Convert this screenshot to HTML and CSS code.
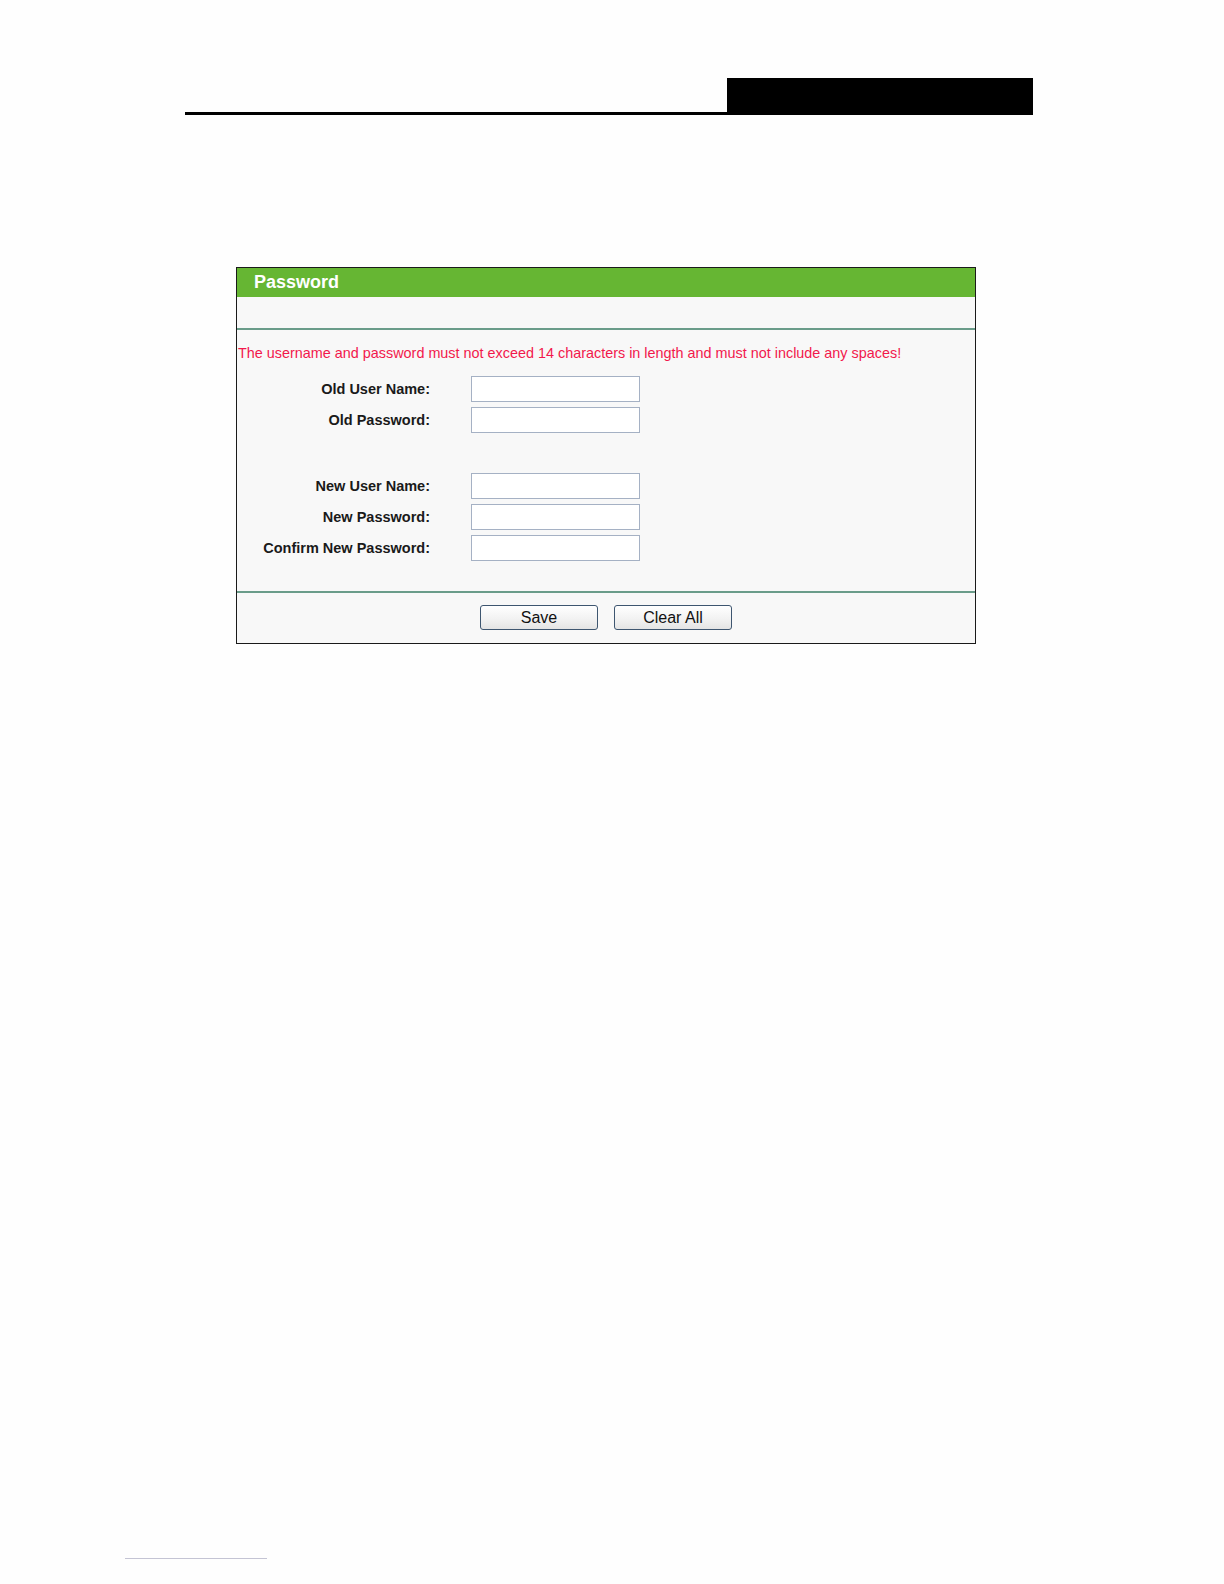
FILE: index.html
```html
<!DOCTYPE html>
<html>
<head>
<meta charset="utf-8">
<link rel="stylesheet" href="styles.css">
</head>
<body>
<div class="page">
  <div class="header">
    <div class="header-rule"></div>
    <div class="header-box"></div>
  </div>

  <div class="panel">
    <div class="panel-head">Password</div>
    <div class="panel-band"></div>
    <div class="panel-body">
      <p class="notice">The username and password must not exceed 14 characters in length and must not include any spaces!</p>
      <div class="form">
        <div class="row"><label class="lbl">Old User Name:</label><input class="field" type="text"></div>
        <div class="row"><label class="lbl">Old Password:</label><input class="field" type="password"></div>
        <div class="spacer"></div>
        <div class="row"><label class="lbl">New User Name:</label><input class="field" type="text"></div>
        <div class="row"><label class="lbl">New Password:</label><input class="field" type="password"></div>
        <div class="row"><label class="lbl">Confirm New Password:</label><input class="field" type="password"></div>
      </div>
    </div>
    <div class="panel-foot">
      <button class="btn">Save</button>
      <button class="btn">Clear All</button>
    </div>
  </div>

  <div class="footnote-rule"></div>
</div>
</body>
</html>
```

FILE: styles.css
```css
html, body {
  margin: 0;
  padding: 0;
  background: #fefefe;
}
body {
  font-family: "Liberation Sans", Arial, sans-serif;
}
.page {
  width: 1224px;
  height: 1584px;
  position: relative;
  padding-top: 78px;
  box-sizing: border-box;
}
.header {
  margin-left: 185px;
  width: 848px;
  display: flex;
  align-items: flex-end;
}
.header-rule {
  flex: 1;
  height: 3px;
  background: #000;
}
.header-box {
  width: 306px;
  height: 37px;
  background: #000;
}
.panel {
  margin-top: 152px;
  margin-left: 236px;
  width: 740px;
  height: 377px;
  box-sizing: border-box;
  border: 1px solid #1a1a1a;
  background: #f8f8f8;
  display: flex;
  flex-direction: column;
}
.panel-head {
  height: 29px;
  background: #66b633;
  color: #fff;
  font-weight: bold;
  font-size: 18px;
  line-height: 29px;
  padding-left: 17px;
}
.panel-band {
  height: 31px;
  border-bottom: 2px solid #6a9c8a;
}
.panel-body {
  height: 263px;
  border-bottom: 2px solid #6a9c8a;
  box-sizing: border-box;
  padding-top: 14px;
}
.notice {
  margin: 0 0 0 1px;
  color: #f2184c;
  font-size: 14.4px;
  line-height: 18px;
}
.form {
  margin-top: 11px;
}
.row {
  display: flex;
  align-items: center;
  height: 31px;
}
.spacer {
  height: 35px;
}
.lbl {
  width: 193px;
  text-align: right;
  font-weight: bold;
  font-size: 14.5px;
  color: #1a1a1a;
}
.field {
  margin: 0 0 0 41px;
  width: 169px;
  height: 26px;
  box-sizing: border-box;
  border: 1px solid #a5b1c4;
  background: #fff;
  padding: 0;
}
.panel-foot {
  flex: 1;
  display: flex;
  justify-content: center;
  align-items: center;
  gap: 16px;
  padding-bottom: 1px;
}
.btn {
  width: 118px;
  height: 25px;
  border: 1px solid #3e5670;
  border-radius: 3px;
  background: linear-gradient(#ffffff, #f1f1f1 60%, #e4e4e4);
  font-family: "Liberation Sans", Arial, sans-serif;
  font-size: 16px;
  color: #111;
  padding: 0;
}
.footnote-rule {
  position: absolute;
  left: 125px;
  top: 1558px;
  width: 142px;
  height: 1px;
  background: #c4c4d4;
}
```
